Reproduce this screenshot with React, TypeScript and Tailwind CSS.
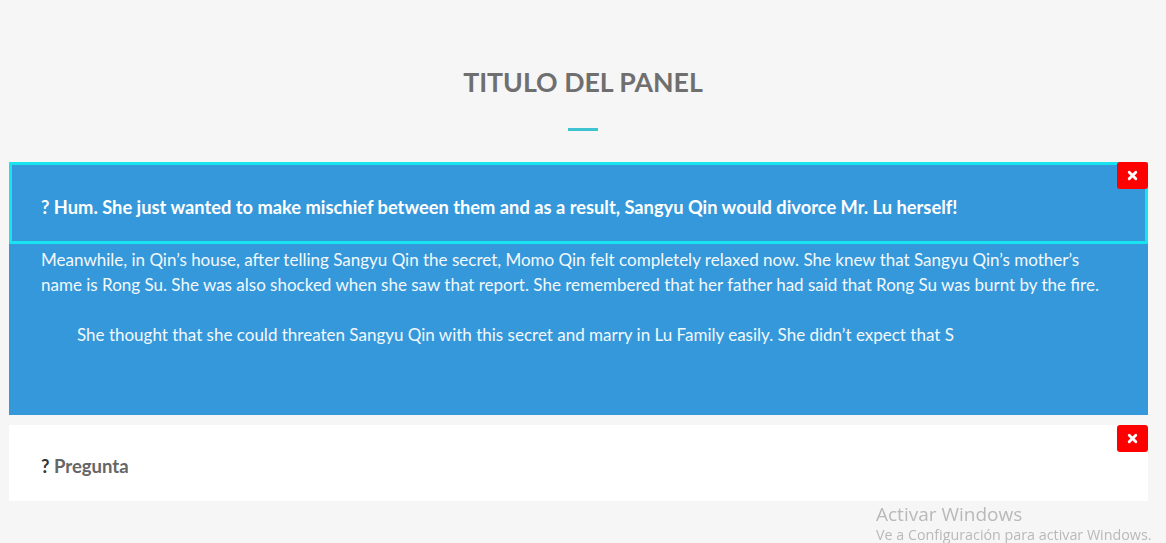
import React from "react";

const CloseButton = () => (
  <button className="absolute right-0 top-0 flex h-[27px] w-[31px] items-center justify-center rounded-[3px] bg-[#ff0000] text-white">
    <svg viewBox="0 0 10 10" className="h-[11px] w-[11px]">
      <path d="M2 2 L8 8 M8 2 L2 8" stroke="white" strokeWidth="2.6" strokeLinecap="round" />
    </svg>
  </button>
);

export default function App() {
  return (
    <div className="relative min-h-[543px] bg-[#f6f6f6] pt-[62px] font-['Lato','Open_Sans',sans-serif]">
      {/* Title */}
      <h2 className="text-center text-[26.7px] font-bold leading-[40px] text-[#6f6f6f]">
        TITULO DEL PANEL
      </h2>
      <div className="mx-auto mt-[26px] h-[3px] w-[30px] bg-[#3fc3d0]" />

      {/* Panel 1 */}
      <div className="relative ml-[9px] mt-[31px] w-[1139px] bg-[#3498db]">
        <div className="flex h-[82px] items-center border-[3px] border-[#19e3ef] pl-[29px] pt-[9px]">
          <h4 className="text-[18.3px] font-bold text-white">
            ? Hum. She just wanted to make mischief between them and as a result, Sangyu Qin would divorce Mr. Lu herself!
          </h4>
        </div>
        <div className="px-[32px] pb-[68px] pt-[3px] text-[17px] leading-[25px] text-[#f3f8fc]">
          <p>
            Meanwhile, in Qin’s house, after telling Sangyu Qin the secret, Momo Qin felt completely relaxed now. She knew that Sangyu Qin’s mother’s name is Rong Su. She was also shocked when she saw that report. She remembered that her father had said that Rong Su was burnt by the fire.
          </p>
          <p className="mt-[25px] pl-[36px]">
            She thought that she could threaten Sangyu Qin with this secret and marry in Lu Family easily. She didn’t expect that S
          </p>
        </div>
        <CloseButton />
      </div>

      {/* Panel 2 */}
      <div className="relative ml-[9px] mt-[10px] flex h-[76px] w-[1139px] items-center bg-white pl-[32px] pt-[8px]">
        <h4 className="text-[18.5px] font-bold text-[#666666]">
          <span className="text-[#333333]">?</span> Pregunta
        </h4>
        <CloseButton />
      </div>

      {/* Windows watermark */}
      <div className="pointer-events-none fixed left-[876px] top-[502px] font-['Open_Sans',sans-serif] text-[#b9b9b9]">
        <div className="text-[19px] leading-[24px]">Activar Windows</div>
        <div className="text-[14.3px] leading-[18px]">Ve a Configuración para activar Windows.</div>
      </div>
    </div>
  );
}
